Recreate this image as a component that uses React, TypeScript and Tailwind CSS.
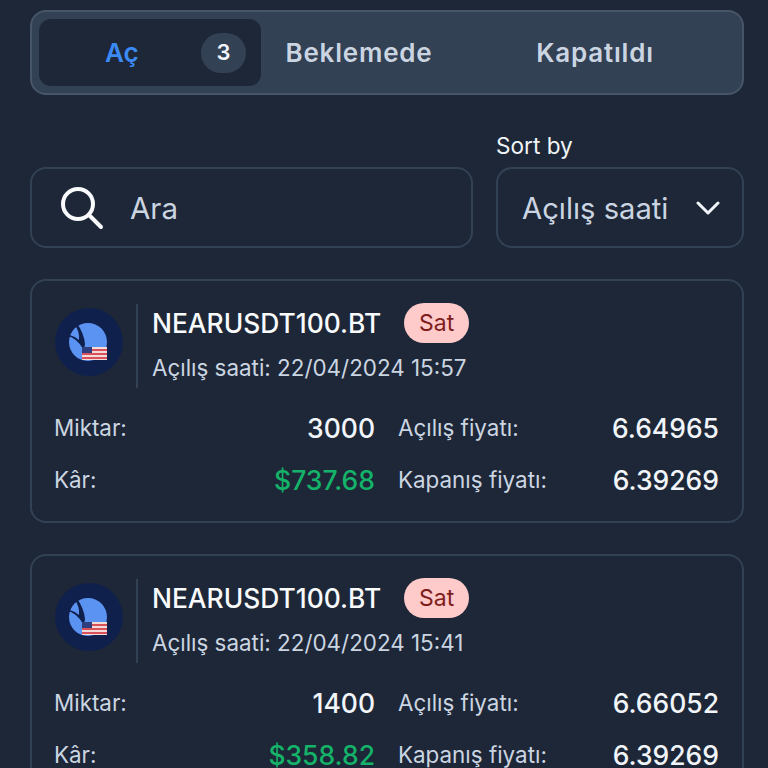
import React from "react";

function Logo() {
  return (
    <div className="w-[68px] h-[68px] shrink-0 mt-[4px] rounded-full bg-[#10204d] flex items-center justify-center">
      <svg width="68" height="68" viewBox="0 0 68 68">
        <circle cx="33" cy="34" r="19" fill="#5a93f2" />
        <path d="M12 28 Q21 29 29 42 L30 36 Q29 25 21 14 L19 15 Q25 24 24 32 Q19 28 12 26Z" fill="#10204d" />
        <rect x="27" y="39" width="25" height="13" fill="#f3dcd8" />
        <rect x="27" y="41" width="25" height="2" fill="#d8505a" />
        <rect x="27" y="45" width="25" height="2" fill="#d8505a" />
        <rect x="27" y="49" width="25" height="2" fill="#d8505a" />
        <rect x="27" y="39" width="10" height="6" fill="#2f3f7d" />
      </svg>
    </div>
  );
}

function Stat({ label, value, green }: { label: string; value: string; green?: boolean }) {
  return (
    <div className="flex items-center justify-between">
      <span className="text-[22.4px] leading-[28px] text-[#cbd5e1]">{label}</span>
      <span className={`text-[26.5px] leading-[32px] font-medium ${green ? "text-[#14b369]" : "text-[#f1f5f9]"}`}>{value}</span>
    </div>
  );
}

function Card({ time, qty, profit, open, close }: { time: string; qty: string; profit: string; open: string; close: string }) {
  return (
    <div className="shrink-0 rounded-[16px] border-2 border-[#334155] pl-[22px] pr-[23px] pt-[23px] pb-[25px]">
      <div className="flex items-start h-[86px] ml-[1px]">
        <Logo />
        <div className="w-[2px] h-[84px] shrink-0 bg-[#334155] ml-[13px] mr-[14px]" />
        <div className="flex flex-col gap-[9px] mt-[-1px]">
          <div className="flex items-center gap-[23px] h-[40px]">
            <span className="text-[26.4px] leading-[32px] font-medium text-[#f8fafc]">NEARUSDT100.BT</span>
            <span className="h-[40px] w-[65px] rounded-full bg-[#fecaca] flex items-center justify-center text-[23px] text-[#7f1d1d]">Sat</span>
          </div>
          <span className="text-[22.4px] leading-[32px] text-[#cbd5e1]">Açılış saati: {time}</span>
        </div>
      </div>
      <div className="mt-[22px] grid grid-cols-2 gap-x-[23px] gap-y-[20px]">
        <Stat label="Miktar:" value={qty} />
        <Stat label="Açılış fiyatı:" value={open} />
        <Stat label="Kâr:" value={profit} green />
        <Stat label="Kapanış fiyatı:" value={close} />
      </div>
    </div>
  );
}

export default function App() {
  return (
    <div className="h-[768px] w-[768px] overflow-hidden bg-[#1d2737] pl-[30px] pr-[24px] pt-[10px] flex flex-col font-['Inter',sans-serif]">
      <div className="shrink-0 h-[85px] rounded-[16px] border-2 border-[#475569] bg-[#334155] p-[7px] flex items-stretch">
        <div className="w-[222px] shrink-0 rounded-[12px] bg-[#1d2737] relative flex items-center pl-[66px]">
          <span className="text-[26px] font-semibold text-[#3b8af5]">Aç</span>
          <span className="absolute left-[162px] w-[45px] h-[40px] rounded-full bg-[#334155] flex items-center justify-center text-[22px] font-semibold text-[#f1f5f9]">3</span>
        </div>
        <div className="w-[216px] shrink-0 pr-[20px] flex items-center justify-center text-[26px] font-semibold tracking-[0.8px] text-[#cbd5e1]">Beklemede</div>
        <div className="flex-1 pr-[22px] flex items-center justify-center text-[26px] font-semibold tracking-[0.8px] text-[#cbd5e1]">Kapatıldı</div>
      </div>

      <div className="shrink-0 mt-[38px] flex gap-[23px] items-end">
        <div className="w-[443px] shrink-0 h-[81px] rounded-[16px] border-2 border-[#334155] flex items-center pl-[28px]">
          <svg width="44" height="44" viewBox="0 0 44 44" fill="none" stroke="#f8fafc" strokeWidth="4" strokeLinecap="round" className="shrink-0">
            <circle cx="18" cy="18" r="15" />
            <path d="M29 29 L41 41" />
          </svg>
          <span className="ml-[26px] pt-[2px] text-[29.5px] text-[#cbd5e1]">Ara</span>
        </div>
        <div className="flex-1 flex flex-col gap-[8px]">
          <span className="text-[22.6px] leading-[26px] text-[#f1f5f9]">Sort by</span>
          <div className="h-[81px] rounded-[16px] border-2 border-[#334155] flex items-center justify-between pl-[24px] pr-[22px]">
            <span className="pt-[2px] text-[29.2px] text-[#cbd5e1]">Açılış saati</span>
            <svg width="24" height="14" viewBox="0 0 24 14" fill="none" stroke="#f1f5f9" strokeWidth="3" strokeLinecap="round" strokeLinejoin="round">
              <path d="M2 2 L12 12 L22 2" />
            </svg>
          </div>
        </div>
      </div>

      <div className="mt-[31px] flex flex-col gap-[31px]">
        <Card time="22/04/2024 15:57" qty="3000" profit="$737.68" open="6.64965" close="6.39269" />
        <Card time="22/04/2024 15:41" qty="1400" profit="$358.82" open="6.66052" close="6.39269" />
      </div>
    </div>
  );
}
